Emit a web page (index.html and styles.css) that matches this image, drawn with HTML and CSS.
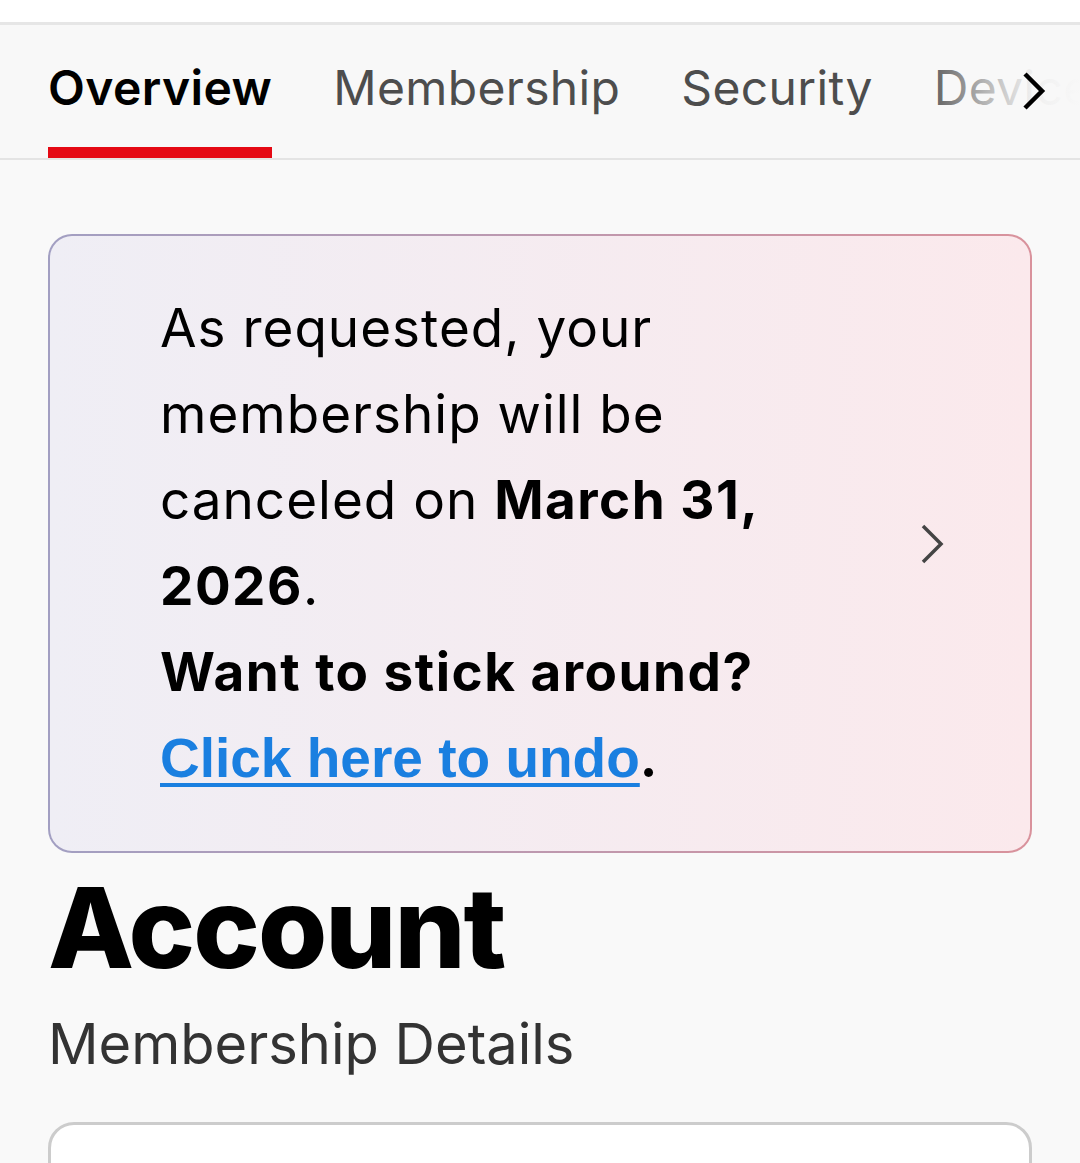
FILE: index.html
```html
<!DOCTYPE html>
<html lang="en">
<head>
<meta charset="utf-8">
<link rel="stylesheet" href="styles.css">
</head>
<body>
<div class="topstrip"></div>
<nav class="tabs">
  <div class="tab-list">
    <div class="tab active">Overview</div>
    <div class="tab">Membership</div>
    <div class="tab">Security</div>
    <div class="tab">Devices</div>
  </div>
  <div class="fade"></div>
  <svg class="tab-next" width="26" height="40" viewBox="0 0 26 40"><path d="M4 3 L21 20 L4 37" fill="none" stroke="#000" stroke-width="4.5"/></svg>
</nav>
<main class="content">
  <div class="banner">
    <p class="banner-text">As requested, your membership will be canceled on <b>March 31, 2026</b>.<br><b>Want to stick around?</b><br><a class="undo" href="#">Click here to undo</a><b>.</b></p>
    <svg class="banner-chev" width="28" height="42" viewBox="0 0 28 42"><path d="M4 3 L22 21 L4 39" fill="none" stroke="#444" stroke-width="3.5"/></svg>
  </div>
  <h1 class="title">Account</h1>
  <h2 class="subtitle">Membership Details</h2>
  <div class="card"></div>
</main>
</body>
</html>
```
FILE: styles.css
```css
html, body { margin: 0; padding: 0; }
body {
  background: #f9f9f9;
  font-family: "Inter", "Roboto", "Liberation Sans", sans-serif;
  color: #000;
  overflow: hidden;
  height: 1163px;
}
.topstrip { height: 22px; background: #fff; border-bottom: 3px solid #e6e6e6; }
.tabs {
  position: relative;
  height: 133px;
  border-bottom: 2px solid #e4e4e4;
  background: #f8f8f8;
  overflow: hidden;
}
.tab-list {
  display: flex;
  gap: 61px;
  padding-left: 48px;
  height: 100%;
  white-space: nowrap;
}
.tab {
  font-size: 48px;
  letter-spacing: 0.35px;
  color: #4d4d4d;
  display: flex;
  align-items: flex-start;
  padding-top: 33px;
  box-sizing: border-box;
  height: 100%;
  position: relative;
}
.tab.active { color: #000; font-weight: 600; letter-spacing: 0.4px; }
.tab.active::after {
  content: "";
  position: absolute;
  left: 0; right: 0; bottom: 0;
  height: 11px;
  background: #e50914;
}
.fade {
  position: absolute;
  top: 0; bottom: 0; right: 0; width: 160px;
  background: linear-gradient(to right, rgba(248,248,248,0), rgba(248,248,248,0.6) 40%, rgba(248,248,248,0.95) 70%, #f8f8f8);
}
.tab-next { position: absolute; left: 1021px; top: 46px; }
.content { padding: 0 48px; }
.banner {
  margin-top: 74px;
  position: relative;
  display: flex;
  align-items: center;
  border-radius: 24px;
  border: 2px solid transparent;
  background:
    linear-gradient(to right, #efeef5, #fbe9ec) padding-box,
    linear-gradient(to right, #a29fc2, #d9929c) border-box;
  padding: 49px 80px 50px 110px;
}
.banner-text {
  margin: 0;
  flex: 1;
  font-size: 53px;
  letter-spacing: 1px;
  line-height: 86px;
  max-width: 640px;
}
.banner-text b { font-weight: 700; letter-spacing: 1.5px; }
.undo {
  font-family: "Liberation Sans", Arial, sans-serif;
  font-size: 55px;
  letter-spacing: 0;
  font-weight: 700;
  color: #1a7fe0;
  text-decoration: underline;
  text-decoration-thickness: 4px;
  text-underline-offset: 6px;
}
.banner-chev { position: absolute; right: 83px; top: 50%; margin-top: -21px; }
.title {
  margin: 18px 0 0;
  font-size: 112px;
  font-weight: 800;
  line-height: 1;
  letter-spacing: -2px;
}
.subtitle {
  margin: 27px 0 0;
  font-size: 56px;
  font-weight: 400;
  color: #333;
}
.card {
  margin-top: 44px;
  height: 200px;
  background: #fff;
  border: 3px solid #cccccc;
  border-radius: 26px;
}
```
